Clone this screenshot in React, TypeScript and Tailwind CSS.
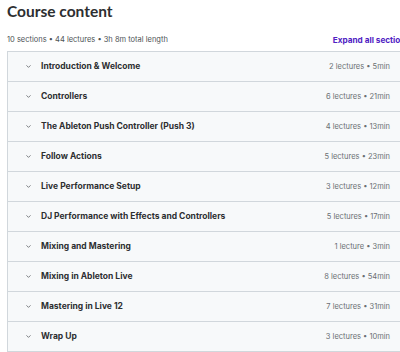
import { ChevronDown } from 'lucide-react'

const sections = [
  { title: 'Introduction & Welcome', meta: '2 lectures • 5min' },
  { title: 'Controllers', meta: '6 lectures • 21min' },
  { title: 'The Ableton Push Controller (Push 3)', meta: '4 lectures • 13min' },
  { title: 'Follow Actions', meta: '5 lectures • 23min' },
  { title: 'Live Performance Setup', meta: '3 lectures • 12min' },
  { title: 'DJ Performance with Effects and Controllers', meta: '5 lectures • 17min' },
  { title: 'Mixing and Mastering', meta: '1 lecture • 3min' },
  { title: 'Mixing in Ableton Live', meta: '8 lectures • 54min' },
  { title: 'Mastering in Live 12', meta: '7 lectures • 31min' },
  { title: 'Wrap Up', meta: '3 lectures • 10min' },
]

export default function App() {
  return (
    <div className="w-[400px] h-[352px] overflow-hidden bg-white text-[#2d2f31]" style={{ fontFamily: 'Inter, "Noto Sans", sans-serif' }}>
      <div className="w-[410px] pl-[7px]">
        <h2 className="pt-[1px] text-[15.5px] font-bold leading-[20px] font-[Lato,sans-serif]">Course content</h2>
        <div className="mt-[12px] flex items-center justify-between h-[14px] text-[7.5px]">
          <span className="text-[#4d5255]">10 sections • 44 lectures • 3h 8m total length</span>
          <span className="font-bold text-[#5022c3] text-[8.2px]">Expand all sections</span>
        </div>
        <div className="mt-[4px] border border-[#d1d7dc] border-b-0">
          {sections.map(s => (
            <div key={s.title} className="flex items-center h-[30px] bg-[#f7f9fa] border-b border-[#d1d7dc] pl-[17px] pr-[19px]">
              <ChevronDown className="w-[7px] h-[7px] text-[#4d5255]" strokeWidth={2.5} />
              <span className="ml-[9px] flex-1 text-[8.5px] font-bold">{s.title}</span>
              <span className="text-[7.5px] text-[#6a6f73]">{s.meta}</span>
            </div>
          ))}
        </div>
      </div>
    </div>
  )
}
